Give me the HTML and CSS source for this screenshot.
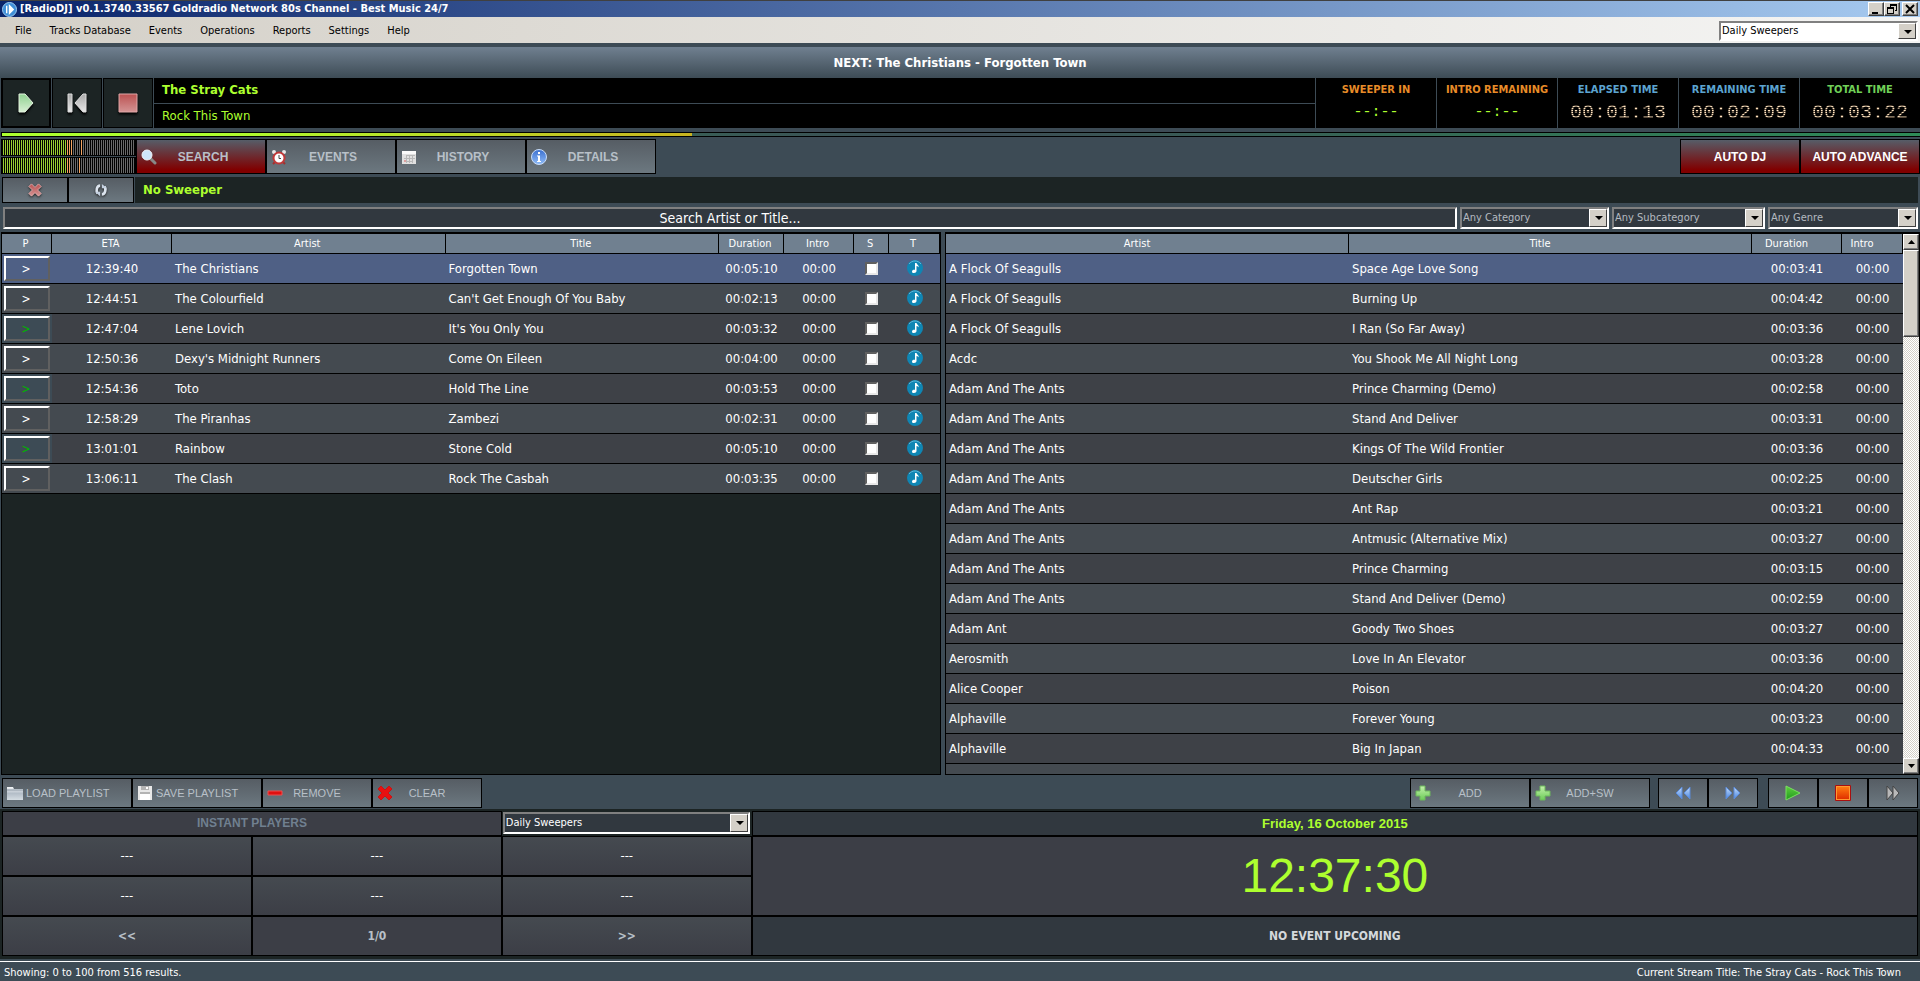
FILE: index.html
```html
<!DOCTYPE html>
<html lang="en">
<head>
    <meta charset="UTF-8">
    <meta name="viewport" content="width=device-width, initial-scale=1.0">
    <title>[RadioDJ] v0.1.3740.33567 Goldradio Network 80s Channel - Best Music 24/7</title>
    <link rel="stylesheet" href="styles.css">
</head>
<body>
    <!-- shared icons and gradients -->
    <svg class="defs" width="0" height="0" aria-hidden="true">
        <defs>
            <linearGradient id="gGreen" x1="0" y1="0" x2="0" y2="1"><stop offset="0" stop-color="#8fd090"/><stop offset="1" stop-color="#d8f0d4"/></linearGradient>
            <linearGradient id="gGray" x1="0" y1="0" x2="0" y2="1"><stop offset="0" stop-color="#a8a8a8"/><stop offset="1" stop-color="#e8e8e8"/></linearGradient>
            <linearGradient id="gRed" x1="0" y1="0" x2="0" y2="1"><stop offset="0" stop-color="#bb5252"/><stop offset="1" stop-color="#d49494"/></linearGradient>
            <linearGradient id="gBlue" x1="0" y1="0" x2="0" y2="1"><stop offset="0" stop-color="#c4dcfa"/><stop offset="1" stop-color="#4a86e0"/></linearGradient>
            <linearGradient id="gInfo" x1="0" y1="0" x2="0" y2="1"><stop offset="0" stop-color="#3a6fd0"/><stop offset="1" stop-color="#8fbcf8"/></linearGradient>
            <linearGradient id="gPlay" x1="0" y1="0" x2="0" y2="1"><stop offset="0" stop-color="#5fd040"/><stop offset="1" stop-color="#1f9a1c"/></linearGradient>
            <linearGradient id="gStop" x1="0" y1="0" x2="0" y2="1"><stop offset="0" stop-color="#ff7a10"/><stop offset="1" stop-color="#e03000"/></linearGradient>
            <linearGradient id="gPlus" x1="0" y1="0" x2="0" y2="1"><stop offset="0" stop-color="#c4f0ac"/><stop offset="1" stop-color="#6ccc58"/></linearGradient>
            <linearGradient id="gSilver" x1="0" y1="0" x2="0" y2="1"><stop offset="0" stop-color="#f4f6f8"/><stop offset=".5" stop-color="#b4bec8"/><stop offset="1" stop-color="#d4dce2"/></linearGradient>
            <symbol id="note" viewBox="0 0 16 16">
                <circle cx="8" cy="8" r="8" fill="#0f86b4"/>
                <path d="M2 4a7.500 7.500 0 0 1 12 0" fill="none" stroke="#5fb8d8"/>
                <path d="M8 3h1.500c.2 1.500 2.500 2 2.500 4.500c-.6-1-1.300-1.300-2.500-1.500V11c0 1.300-1.200 2-2.500 2S5 12.300 5 11.400C5 10 6.500 9.400 8 9.800z" fill="#fff"/>
            </symbol>
            <symbol id="plus" viewBox="0 0 16 16">
                <path d="M5 1h5v5h5v5h-5v4H5v-4H1V6h4z" fill="url(#gPlus)" stroke="#6cb85c"/>
            </symbol>
            <symbol id="cross" viewBox="0 0 16 16">
                <path d="M4 1l4 4 4-4 3 3-4 4 4 4-3 3-4-4-4 4-3-3 4-4-4-4z"/>
            </symbol>
        </defs>
    </svg>

    <header class="titlebar">
        <svg class="app-icon" viewBox="0 0 16 16"><circle cx="8" cy="8" r="7.500" fill="#3f8fd8" stroke="#a4d0f4"/><path d="M5 4v8M8 4v8l4-4z" fill="#fff" stroke="#fff" stroke-width="1.500"/></svg>
        <h1>[RadioDJ] v0.1.3740.33567 Goldradio Network 80s Channel - Best Music 24/7</h1>
        <div class="window-buttons">
            <button type="button" aria-label="Minimize"><svg viewBox="0 0 12 10"><path d="M2 8h6v2H2z"/></svg></button>
            <button type="button" aria-label="Restore"><svg viewBox="0 0 12 10"><path d="M4 0h7v7H9V6h1V2H5v1H4zM1 3h7v7H1zM2 5v4h5V5z" fill-rule="evenodd"/></svg></button>
            <button type="button" class="close" aria-label="Close"><svg viewBox="0 0 12 10"><path d="M2 1l8 8M10 1L2 9" stroke="#000" stroke-width="2"/></svg></button>
        </div>
    </header>

    <nav class="menubar">
        <a href="#">File</a>
        <a href="#">Tracks Database</a>
        <a href="#">Events</a>
        <a href="#">Operations</a>
        <a href="#">Reports</a>
        <a href="#">Settings</a>
        <a href="#">Help</a>
        <div class="combo light">
            <select aria-label="Sweeper list"><option>Daily Sweepers</option></select>
        </div>
    </nav>

    <div class="next-bar">NEXT: The Christians - Forgotten Town</div>

    <section class="deck">
        <div class="deck-buttons">
            <button type="button" class="active" aria-label="Play"><svg viewBox="0 0 24 24"><path d="M5 3h6l8 9-8 9H5z" fill="url(#gGreen)" stroke="#e4f4e0"/></svg></button>
            <button type="button" aria-label="Previous"><svg viewBox="0 0 24 24"><path d="M3 3h4v18H3zM21 3v18h-3l-8-9 8-9z" fill="url(#gGray)" stroke="#ddd"/></svg></button>
            <button type="button" aria-label="Stop"><svg viewBox="0 0 24 24"><path d="M3 3h18v18H3z" fill="url(#gRed)" stroke="#e0a8a8"/></svg></button>
        </div>
        <div class="now-playing">
            <div class="artist">The Stray Cats</div>
            <div class="title">Rock This Town</div>
        </div>
        <div class="timer orange"><h2>SWEEPER IN</h2><span class="idle">--:--</span></div>
        <div class="timer orange"><h2>INTRO REMAINING</h2><span class="idle">--:--</span></div>
        <div class="timer blue"><h2>ELAPSED TIME</h2><span class="led">00:01:13</span></div>
        <div class="timer blue"><h2>REMAINING TIME</h2><span class="led">00:02:09</span></div>
        <div class="timer green"><h2>TOTAL TIME</h2><span class="led">00:03:22</span></div>
    </section>

    <div class="track-progress"><div class="fill" style="width: 36%"></div></div>

    <section class="tabs-row">
        <div class="vu">
            <div class="meter left"></div>
            <div class="meter right"></div>
        </div>
        <div class="tabs">
            <button type="button" class="tab red">
                <svg viewBox="0 0 16 16"><path d="M9 9l5 5" stroke="#888" stroke-width="3" stroke-linecap="round"/><circle cx="6" cy="6" r="5" fill="#cfe6fa" stroke="#f0f4f8"/></svg>
                <span>SEARCH</span>
            </button>
            <button type="button" class="tab">
                <svg viewBox="0 0 16 16"><path d="M4 13l-2 2M12 13l2 2" stroke="#a03030" stroke-width="2"/><circle cx="3" cy="3" r="2" fill="#e8e8e8"/><circle cx="13" cy="3" r="2" fill="#e8e8e8"/><circle cx="8" cy="9" r="5.500" fill="#fff" stroke="#c03838" stroke-width="2"/><path d="M8 6v3.500h2" fill="none" stroke="#444"/></svg>
                <span>EVENTS</span>
            </button>
            <button type="button" class="tab">
                <svg viewBox="0 0 16 16"><path d="M1 2h14v13H1z" fill="#e0e0e0"/><path d="M1 2h14v3H1z" fill="#fafafa"/><path d="M6 6.500h8M3 9.500h11M3 12.500h9M5.500 6v8M8.500 6v8M11.500 6v8" stroke="#b8b8b8"/><path d="M3 11h2v2H3z" fill="#dca0a0"/></svg>
                <span>HISTORY</span>
            </button>
            <button type="button" class="tab">
                <svg viewBox="0 0 16 16"><circle cx="8" cy="8" r="7.500" fill="url(#gInfo)" stroke="#c8dcf8"/><path d="M7 3h2v2H7zM6 6.500h3V12h1v1H6v-1h1V7.500H6z" fill="#fff"/></svg>
                <span>DETAILS</span>
            </button>
        </div>
        <div class="auto-buttons">
            <button type="button" class="red">AUTO DJ</button>
            <button type="button" class="red">AUTO ADVANCE</button>
        </div>
    </section>

    <section class="sweeper-row">
        <button type="button" aria-label="Clear sweeper"><svg viewBox="0 0 16 16" fill="url(#gRed)" stroke="#e8b4b4"><use href="#cross"/></svg></button>
        <button type="button" aria-label="Reload sweeper"><svg viewBox="0 0 16 16"><path d="M7 3C3 3 2 9 4 12M9 13c4 0 5-6 3-9" fill="none" stroke="#dce4ee" stroke-width="3"/><path d="M1 10h6v5zM15 6H9V1z" fill="#c4d0e0"/></svg></button>
        <div class="sweeper-name">No Sweeper</div>
    </section>

    <section class="filters">
        <input type="text" class="search" placeholder="Search Artist or Title..." aria-label="Search Artist or Title">
        <div class="combo category"><select aria-label="Category"><option>Any Category</option></select></div>
        <div class="combo subcategory"><select aria-label="Subcategory"><option>Any Subcategory</option></select></div>
        <div class="combo genre"><select aria-label="Genre"><option>Any Genre</option></select></div>
    </section>

    <main class="lists">
        <div class="list playlist">
            <table>
                <colgroup><col class="c-play"><col class="c-eta"><col><col><col class="c-dur"><col class="c-intro"><col class="c-s"><col class="c-t"></colgroup>
                <thead>
                    <tr><th>P</th><th>ETA</th><th>Artist</th><th>Title</th><th>Duration</th><th>Intro</th><th>S</th><th>T</th></tr>
                </thead>
                <tbody>
                    <tr class="selected"><td class="p"><button type="button">&gt;</button></td><td class="mid">12:39:40</td><td>The Christians</td><td>Forgotten Town</td><td class="mid">00:05:10</td><td class="mid">00:00</td><td class="mid"><input type="checkbox" aria-label="Select Forgotten Town"></td><td class="mid"><svg class="note"><use href="#note"/></svg></td></tr>
                    <tr><td class="p"><button type="button">&gt;</button></td><td class="mid">12:44:51</td><td>The Colourfield</td><td>Can't Get Enough Of You Baby</td><td class="mid">00:02:13</td><td class="mid">00:00</td><td class="mid"><input type="checkbox" aria-label="Select Can't Get Enough Of You Baby"></td><td class="mid"><svg class="note"><use href="#note"/></svg></td></tr>
                    <tr><td class="p"><button type="button">&gt;</button></td><td class="mid">12:47:04</td><td>Lene Lovich</td><td>It's You Only You</td><td class="mid">00:03:32</td><td class="mid">00:00</td><td class="mid"><input type="checkbox" aria-label="Select It's You Only You"></td><td class="mid"><svg class="note"><use href="#note"/></svg></td></tr>
                    <tr><td class="p"><button type="button">&gt;</button></td><td class="mid">12:50:36</td><td>Dexy's Midnight Runners</td><td>Come On Eileen</td><td class="mid">00:04:00</td><td class="mid">00:00</td><td class="mid"><input type="checkbox" aria-label="Select Come On Eileen"></td><td class="mid"><svg class="note"><use href="#note"/></svg></td></tr>
                    <tr><td class="p"><button type="button">&gt;</button></td><td class="mid">12:54:36</td><td>Toto</td><td>Hold The Line</td><td class="mid">00:03:53</td><td class="mid">00:00</td><td class="mid"><input type="checkbox" aria-label="Select Hold The Line"></td><td class="mid"><svg class="note"><use href="#note"/></svg></td></tr>
                    <tr><td class="p"><button type="button">&gt;</button></td><td class="mid">12:58:29</td><td>The Piranhas</td><td>Zambezi</td><td class="mid">00:02:31</td><td class="mid">00:00</td><td class="mid"><input type="checkbox" aria-label="Select Zambezi"></td><td class="mid"><svg class="note"><use href="#note"/></svg></td></tr>
                    <tr><td class="p"><button type="button">&gt;</button></td><td class="mid">13:01:01</td><td>Rainbow</td><td>Stone Cold</td><td class="mid">00:05:10</td><td class="mid">00:00</td><td class="mid"><input type="checkbox" aria-label="Select Stone Cold"></td><td class="mid"><svg class="note"><use href="#note"/></svg></td></tr>
                    <tr><td class="p"><button type="button">&gt;</button></td><td class="mid">13:06:11</td><td>The Clash</td><td>Rock The Casbah</td><td class="mid">00:03:35</td><td class="mid">00:00</td><td class="mid"><input type="checkbox" aria-label="Select Rock The Casbah"></td><td class="mid"><svg class="note"><use href="#note"/></svg></td></tr>
                </tbody>
            </table>
        </div>

        <div class="list library">
            <div class="table-wrap">
                <table>
                    <colgroup><col><col><col class="l-dur"><col class="l-intro"></colgroup>
                    <thead>
                        <tr><th>Artist</th><th>Title</th><th>Duration</th><th>Intro</th></tr>
                    </thead>
                    <tbody>
                        <tr class="selected"><td>A Flock Of Seagulls</td><td>Space Age Love Song</td><td class="mid">00:03:41</td><td class="mid">00:00</td></tr>
                        <tr><td>A Flock Of Seagulls</td><td>Burning Up</td><td class="mid">00:04:42</td><td class="mid">00:00</td></tr>
                        <tr><td>A Flock Of Seagulls</td><td>I Ran (So Far Away)</td><td class="mid">00:03:36</td><td class="mid">00:00</td></tr>
                        <tr><td>Acdc</td><td>You Shook Me All Night Long</td><td class="mid">00:03:28</td><td class="mid">00:00</td></tr>
                        <tr><td>Adam And The Ants</td><td>Prince Charming (Demo)</td><td class="mid">00:02:58</td><td class="mid">00:00</td></tr>
                        <tr><td>Adam And The Ants</td><td>Stand And Deliver</td><td class="mid">00:03:31</td><td class="mid">00:00</td></tr>
                        <tr><td>Adam And The Ants</td><td>Kings Of The Wild Frontier</td><td class="mid">00:03:36</td><td class="mid">00:00</td></tr>
                        <tr><td>Adam And The Ants</td><td>Deutscher Girls</td><td class="mid">00:02:25</td><td class="mid">00:00</td></tr>
                        <tr><td>Adam And The Ants</td><td>Ant Rap</td><td class="mid">00:03:21</td><td class="mid">00:00</td></tr>
                        <tr><td>Adam And The Ants</td><td>Antmusic (Alternative Mix)</td><td class="mid">00:03:27</td><td class="mid">00:00</td></tr>
                        <tr><td>Adam And The Ants</td><td>Prince Charming</td><td class="mid">00:03:15</td><td class="mid">00:00</td></tr>
                        <tr><td>Adam And The Ants</td><td>Stand And Deliver (Demo)</td><td class="mid">00:02:59</td><td class="mid">00:00</td></tr>
                        <tr><td>Adam Ant</td><td>Goody Two Shoes</td><td class="mid">00:03:27</td><td class="mid">00:00</td></tr>
                        <tr><td>Aerosmith</td><td>Love In An Elevator</td><td class="mid">00:03:36</td><td class="mid">00:00</td></tr>
                        <tr><td>Alice Cooper</td><td>Poison</td><td class="mid">00:04:20</td><td class="mid">00:00</td></tr>
                        <tr><td>Alphaville</td><td>Forever Young</td><td class="mid">00:03:23</td><td class="mid">00:00</td></tr>
                        <tr><td>Alphaville</td><td>Big In Japan</td><td class="mid">00:04:33</td><td class="mid">00:00</td></tr>
                        <tr><td></td><td></td><td></td><td></td></tr>
                    </tbody>
                </table>
            </div>
            <div class="scrollbar">
                <button type="button" aria-label="Scroll up"><svg viewBox="0 0 7 4"><path d="M0 4h7L3.500 0z"/></svg></button>
                <div class="thumb"></div>
                <div class="track"></div>
                <button type="button" aria-label="Scroll down"><svg viewBox="0 0 7 4"><path d="M0 0h7L3.500 4z"/></svg></button>
            </div>
        </div>
    </main>

    <section class="toolbar">
        <div class="group">
            <button type="button" class="wide"><svg viewBox="0 0 16 16"><path d="M0 2h6l1 2h9v11H0z" fill="url(#gSilver)"/><path d="M0 5h16" stroke="#8b98a4"/></svg><span>LOAD PLAYLIST</span></button>
            <button type="button" class="wide"><svg viewBox="0 0 16 16"><path d="M1 1h14v14H1z" fill="#e8e8e8"/><path d="M4 1h8v4H4zM3 7h10v2H3z" fill="#b4b4b4"/><path d="M9 2h2v2H9z" fill="#fff"/><path d="M3 9h10v6H3z" fill="#fff"/></svg><span>SAVE PLAYLIST</span></button>
            <button type="button" class="narrow"><svg viewBox="0 0 16 16"><path d="M1 6h14v4H1z" fill="#e01010" stroke="#ec5050"/></svg><span>REMOVE</span></button>
            <button type="button" class="narrow"><svg viewBox="0 0 16 16" fill="#e81010" stroke="#c81414"><use href="#cross"/></svg><span>CLEAR</span></button>
        </div>
        <div class="group push">
            <button type="button" class="add"><svg viewBox="0 0 16 16"><use href="#plus"/></svg><span>ADD</span></button>
            <button type="button" class="add"><svg viewBox="0 0 16 16"><use href="#plus"/></svg><span>ADD+SW</span></button>
        </div>
        <div class="group">
            <button type="button" class="icon" aria-label="Back"><svg viewBox="0 0 16 16"><path d="M7 2v12L1 8zM15 2v12L9 8z" fill="url(#gBlue)" stroke="#5a8ad8"/></svg></button>
            <button type="button" class="icon" aria-label="Forward"><svg viewBox="0 0 16 16"><path d="M1 2v12l6-6zM9 2v12l6-6z" fill="url(#gBlue)" stroke="#5a8ad8"/></svg></button>
        </div>
        <div class="group">
            <button type="button" class="icon" aria-label="Preview play"><svg viewBox="0 0 16 16"><path d="M1 1v14l14-7z" fill="url(#gPlay)" stroke="#7ae060"/></svg></button>
            <button type="button" class="icon" aria-label="Preview stop"><svg viewBox="0 0 16 16"><path d="M.5.5h15v15H.5z" fill="#ff9a30" stroke="#a81010"/><path d="M2 2h12v12H2z" fill="url(#gStop)"/></svg></button>
            <button type="button" class="icon" aria-label="Preview skip"><svg viewBox="0 0 16 16"><path d="M2 1v14l6-7zM8 1v14l6-7z" fill="#b8b8b8" stroke="#444"/></svg></button>
        </div>
    </section>

    <section class="bottom">
        <div class="instant">
            <div class="instant-title">INSTANT PLAYERS</div>
            <div class="combo"><select aria-label="Instant players list"><option>Daily Sweepers</option></select></div>
            <button type="button">---</button>
            <button type="button">---</button>
            <button type="button">---</button>
            <button type="button">---</button>
            <button type="button">---</button>
            <button type="button">---</button>
            <button type="button" class="pager">&lt;&lt;</button>
            <div class="page">1/0</div>
            <button type="button" class="pager">&gt;&gt;</button>
        </div>
        <div class="clock">
            <div class="date">Friday, 16 October 2015</div>
            <div class="time">12:37:30</div>
            <div class="event">NO EVENT UPCOMING</div>
        </div>
    </section>

    <footer class="statusbar">
        <span>Showing: 0 to 100 from 516 results.</span>
        <span>Current Stream Title: The Stray Cats - Rock This Town</span>
    </footer>
</body>
</html>
```

FILE: styles.css
```css
* {
    box-sizing: border-box;
}

body {
    margin: 0;
    height: 100vh;
    min-height: 700px;
    display: flex;
    flex-direction: column;
    background: #3d4b55;
    color: #fff;
    font-family: "DejaVu Sans Condensed", "Noto Sans", sans-serif;
    font-size: 13px;
    line-height: 16px;
    overflow: hidden;
}

button, input, select {
    font: inherit;
    color: inherit;
    margin: 0;
    padding: 0;
    border-radius: 0;
}

h1, h2 {
    margin: 0;
    font-size: 11px;
}

.defs {
    position: absolute;
}

/* window frame */
.titlebar {
    display: flex;
    align-items: center;
    gap: 3px;
    height: 17px;
    padding: 0 2px;
    border-top: 1px solid #404040;
    background: linear-gradient(90deg, #0a246a, #a6caf0);
    flex: none;
}

.app-icon {
    width: 15px;
    height: 15px;
}

.window-buttons {
    display: flex;
    margin-left: auto;
}

.window-buttons button,
.scrollbar button,
.scrollbar .thumb {
    background: #d4d0c8;
    border: 1px solid;
    border-color: #fff #404040 #404040 #fff;
    box-shadow: inset -1px -1px #808080;
}

.window-buttons button {
    width: 16px;
    height: 14px;
    display: flex;
    align-items: center;
    justify-content: center;
}

.window-buttons svg {
    width: 12px;
    height: 10px;
}

.window-buttons .close {
    margin-left: 2px;
}

.menubar {
    display: flex;
    align-items: center;
    gap: 18px;
    height: 26px;
    padding: 2px 2px 0 15px;
    background: linear-gradient(90deg, #d4d0c8, #f5f5f4);
    font-size: 11px;
    flex: none;
}

.menubar a {
    color: #000;
    text-decoration: none;
}

.menubar .combo {
    width: 199px;
    height: 20px;
    margin-left: auto;
}

/* drop-downs */
.combo {
    position: relative;
    height: 22px;
    background: #31383f;
    border: 2px solid;
    border-color: #808080 #fff #fff #808080;
    color: #b4bac0;
    font-size: 11px;
}

.combo.light {
    background: #fff;
    color: #000;
}

.combo select {
    display: block;
    width: 100%;
    height: 100%;
    padding: 0 18px 0 1px;
    border: 0;
    background: none;
    appearance: none;
}

.combo::before {
    content: "";
    position: absolute;
    top: 0;
    right: 0;
    bottom: 0;
    width: 16px;
    background: #d4d0c8;
    border: 1px solid;
    border-color: #fff #404040 #404040 #fff;
    pointer-events: none;
}

.combo::after {
    content: "";
    position: absolute;
    top: 7px;
    right: 4px;
    border: 4px solid transparent;
    border-top-color: #000;
    border-bottom: 0;
    pointer-events: none;
}

/* now playing */
.next-bar {
    height: 31px;
    margin-top: 4px;
    background: linear-gradient(#708090, #3d4b55);
    font-weight: bold;
    line-height: 31px;
    text-align: center;
    flex: none;
}

.deck {
    display: flex;
    gap: 1px;
    height: 50px;
    padding-left: 1px;
    flex: none;
}

.deck-buttons {
    display: flex;
    gap: 1px;
}

.deck-buttons button {
    display: flex;
    align-items: center;
    justify-content: center;
    width: 50px;
    background: #1c2424;
    border: 1px solid #000;
}

.deck-buttons .active {
    border-width: 2px;
}

.deck-buttons svg {
    width: 24px;
    height: 24px;
    filter: drop-shadow(0 2px 1px #000);
}

.now-playing {
    flex: 1;
    display: flex;
    flex-direction: column;
    gap: 1px;
    color: #adff2f;
}

.now-playing div {
    flex: 1;
    padding: 0 8px;
    background: #000;
    line-height: 24px;
}

.now-playing .artist {
    font-weight: bold;
}

.timer {
    width: 120px;
    padding-top: 4px;
    background: #000;
    text-align: center;
}

.timer h2 {
    line-height: 16px;
    white-space: nowrap;
}

.timer.orange h2 { color: #e88c28; }
.timer.blue h2 { color: #5ca4d0; }
.timer.green h2 { color: #70d058; }

.timer span {
    display: block;
    font-family: "Liberation Mono", monospace;
    line-height: 30px;
}

.timer .idle {
    color: #adff2f;
    font-size: 15px;
}

/* scan lines through the digits */
.timer .led {
    font-size: 20px;
    color: transparent;
    background: repeating-linear-gradient(#ffe4c0 0 1px, #5c4c3c 1px 2px);
    -webkit-background-clip: text;
    background-clip: text;
}

.track-progress {
    height: 5px;
    margin: 4px 0 2px 1px;
    border: 1px solid #000;
    border-right: 0;
    background: linear-gradient(90deg, #2e8b57, #3d4b55 50%, #2e8b57);
    flex: none;
}

.track-progress .fill {
    height: 100%;
    background: linear-gradient(90deg, #adff2f 30%, #c8b420);
}

/* tabs */
.tabs-row {
    display: flex;
    height: 35px;
    padding-left: 1px;
    flex: none;
}

.vu {
    display: flex;
    flex-direction: column;
    gap: 1px;
    width: 135px;
}

.meter {
    flex: 1;
    border: 1px solid #000;
}

.meter.left {
    background: repeating-linear-gradient(90deg, #000 0 1px, transparent 1px 2px), linear-gradient(90deg, #9acd32 64px, #f4a460 64px 71px, #696969 71px 78px, #f4a460 78px 80px, #696969 80px);
}

.meter.right {
    background: repeating-linear-gradient(90deg, #000 0 1px, transparent 1px 2px), linear-gradient(90deg, #9acd32 64px, #f4a460 64px 69px, #696969 69px 76px, #f4a460 76px 78px, #696969 78px);
}

.tabs, .auto-buttons, .group {
    display: flex;
}

.tab, .auto-buttons button, .sweeper-row button, .toolbar button {
    display: flex;
    align-items: center;
    border: 1px solid #000;
    background: linear-gradient(#565d64, #6c7880);
    color: #b8c0c8;
    font-family: "Liberation Sans", sans-serif;
}

.tab, .auto-buttons button {
    font-size: 12px;
    font-weight: bold;
}

.tab {
    width: 130px;
    padding: 0 4px;
}

.tab svg {
    width: 16px;
    height: 16px;
    flex: none;
}

.tab span {
    flex: 1;
    padding-right: 12px;
}

.tabs-row .red {
    background: linear-gradient(#565d68, #800000 90%);
}

.auto-buttons {
    margin-left: auto;
}

.auto-buttons button {
    width: 120px;
    justify-content: center;
    color: #fff;
    white-space: nowrap;
}

.sweeper-row {
    display: flex;
    height: 26px;
    margin: 3px 2px 0;
    flex: none;
}

.sweeper-row button {
    width: 66px;
    justify-content: center;
}

.sweeper-row svg {
    width: 14px;
    height: 14px;
    filter: drop-shadow(0 1px 1px #222);
}

.sweeper-name {
    flex: 1;
    margin-left: 1px;
    padding-left: 8px;
    background: #1c2424;
    color: #adff2f;
    font-weight: bold;
    line-height: 26px;
}

.filters {
    display: flex;
    gap: 3px;
    margin: 4px 2px 3px 3px;
    height: 22px;
    flex: none;
}

.search {
    flex: 1;
    min-width: 0;
    background: #31383f;
    border: 2px solid;
    border-color: #808080 #fff #fff #808080;
    font-size: 14px;
    text-align: center;
}

.search::placeholder {
    color: #fff;
    opacity: 1;
}

.category { width: 149px; }
.subcategory { width: 153px; }
.genre { width: 150px; }

/* track lists */
.lists {
    flex: 1;
    min-height: 0;
    display: flex;
    gap: 4px;
    padding-left: 1px;
}

.list {
    display: flex;
    min-width: 0;
    border: 1px solid #000;
    border-top-width: 2px;
    background: #1c2424;
    overflow: hidden;
}

.playlist {
    flex: 940;
}

.library {
    flex: 975;
}

.table-wrap {
    flex: 1;
    min-width: 0;
    overflow: hidden;
}

table {
    width: 100%;
    table-layout: fixed;
    border-spacing: 0;
}

.playlist table {
    align-self: flex-start;
}

.c-play { width: 50px; }
.c-eta { width: 120px; }
.c-dur { width: 65px; }
.c-intro { width: 70px; }
.c-s { width: 35px; }
.c-t { width: 51px; }
.l-dur { width: 90px; }
.l-intro { width: 61px; }

th {
    height: 20px;
    padding: 0 2px 0 0;
    border-right: 1px solid #000;
    border-bottom: 1px solid #000;
    background: #708090;
    font-size: 11px;
    font-weight: normal;
}

.library th {
    padding-right: 20px;
}

td {
    height: 30px;
    padding: 0 3px;
    border-bottom: 1px solid #000;
    white-space: nowrap;
    overflow: hidden;
}

tbody tr:nth-child(even) {
    background: #444a50;
}

tbody tr:nth-child(odd) {
    background: #3e4147;
}

tbody tr.selected {
    background: #4f6085;
}

td.mid {
    text-align: center;
}

td.p {
    padding: 0 2px;
}

td.p button {
    display: block;
    width: 46px;
    height: 25px;
    padding-right: 2px;
    border: 2px solid;
    border-color: #fff #606060 #606060 #fff;
    background: none;
    font-size: 12px;
    line-height: 16px;
}

tbody tr:nth-child(odd):not(.selected) td.p {
    background: #3d4b55;
    color: #00b400;
}

td input {
    display: block;
    width: 13px;
    height: 13px;
    margin: 0 auto;
    appearance: none;
    background: #fff;
    border: 2px solid;
    border-color: #606060 #e8e8e8 #e8e8e8 #606060;
}

.note {
    display: block;
    width: 16px;
    height: 16px;
    margin: 0 auto 2px;
}

.scrollbar {
    display: flex;
    flex-direction: column;
    width: 16px;
    background: repeating-conic-gradient(#d4d0c8 0 25%, #fff 0 50%) 0 0 / 2px 2px;
}

.scrollbar button {
    display: flex;
    align-items: center;
    justify-content: center;
    width: 16px;
    height: 16px;
    flex: none;
}

.scrollbar svg {
    width: 7px;
    height: 4px;
}

.scrollbar .thumb {
    height: 87px;
}

.scrollbar .track {
    flex: 1;
}

/* toolbar */
.toolbar {
    display: flex;
    height: 30px;
    margin: 3px 2px 1px;
    flex: none;
}

.toolbar .push {
    margin-left: auto;
}

.toolbar .push + .group {
    margin: 0 10px 0 8px;
}

.toolbar button {
    padding: 0 4px;
    font-size: 11px;
}

.toolbar svg {
    width: 16px;
    height: 16px;
    flex: none;
}

.toolbar span {
    flex: 1;
    white-space: nowrap;
}

.toolbar .wide { width: 130px; }
.toolbar .narrow { width: 110px; }
.toolbar .add { width: 120px; }
.toolbar .wide span { text-align: left; padding-left: 3px; }
.toolbar .narrow span, .toolbar .add span { padding-right: 16px; }

.toolbar .icon {
    width: 50px;
    justify-content: center;
}

/* instant players and clock */
.bottom {
    display: grid;
    grid-template-columns: 9fr 14fr;
    padding: 2px 2px 3px;
    height: 150px;
    background: #1c2424;
    flex: none;
}

.instant {
    display: grid;
    grid-template-columns: repeat(3, 1fr);
    grid-template-rows: 25px 40px 40px 40px;
}

.instant button, .instant-title, .page, .clock div {
    border: 1px solid #000;
}

.instant button {
    background: linear-gradient(#454a50, #3c3e46);
}

.instant .pager, .instant .page {
    color: #b8c0c8;
    font-size: 12px;
    font-weight: bold;
}

.instant-title {
    grid-column: span 2;
    background: #3c3e46;
    color: #708090;
    font-family: Impact, "Liberation Sans Narrow", "Liberation Sans", sans-serif;
    font-size: 12px;
    font-weight: bold;
    line-height: 23px;
    text-align: center;
}

.instant .combo {
    color: #fff;
    margin: 1px 2px 2px 1px;
}

.page {
    background: #3c3e46;
    line-height: 38px;
    text-align: center;
}

.clock {
    display: grid;
    grid-template-rows: 25px 80px 40px;
    text-align: center;
    font-weight: bold;
}

.clock .date {
    background: #31383f;
    color: #adff2f;
    font-family: "Liberation Sans", sans-serif;
    line-height: 23px;
}

.clock .time {
    background: #3c3e46;
    color: #adff2f;
    font-family: "Liberation Sans", sans-serif;
    font-size: 48px;
    font-weight: normal;
    line-height: 78px;
}

.clock .event {
    background: #31383f;
    color: #d4d8dc;
    font-size: 12px;
    line-height: 38px;
}

.statusbar {
    display: flex;
    justify-content: space-between;
    height: 20px;
    margin-top: 2px;
    padding: 0 19px 0 4px;
    border-top: 1px solid #fff;
    font-size: 11px;
    line-height: 22px;
    flex: none;
}
```
